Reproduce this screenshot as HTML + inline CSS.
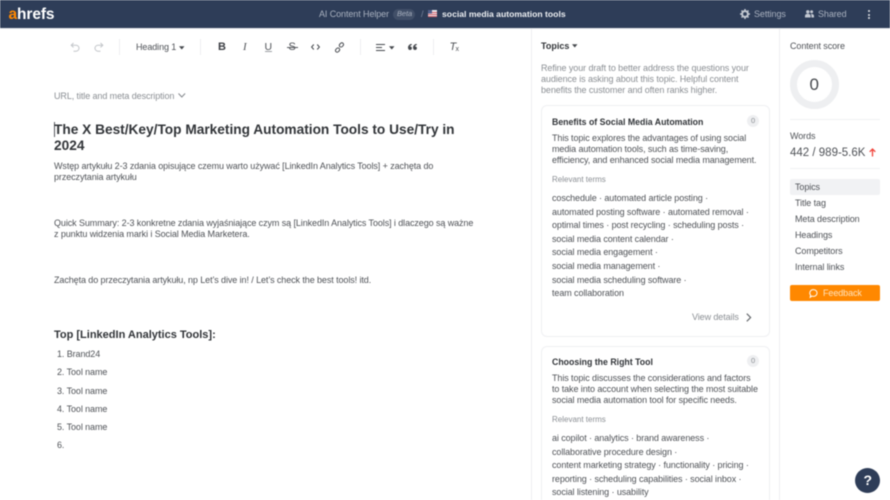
<!DOCTYPE html>
<html lang="en">
<head>
<meta charset="utf-8">
<title>AI Content Helper</title>
<style>
html,body{margin:0;padding:0;background:#fff}
body{width:890px;height:500px;overflow:hidden;position:relative;font-family:"Liberation Sans",sans-serif;color:#3c3f44}
#w{position:absolute;left:0;top:0;width:890px;height:500px;overflow:hidden;filter:blur(.4px)}
.t{position:absolute;white-space:nowrap;line-height:14px;height:14px;font-size:9px;letter-spacing:-.09px;color:#4f5257}
.b{position:absolute}
.g{color:#8a8e93}
.h{font-weight:bold;color:#313438;letter-spacing:0}
.s{position:absolute;width:1px;background:#eeeff1}
svg{position:absolute;overflow:visible}
</style>
</head>
<body>
<div id="w">
<!-- header -->
<div class="b" style="left:0;top:0;width:890px;height:28px;background:#2e3d58"></div>
<div class="b" style="left:0;top:28px;width:890px;height:1px;background:#e4e6ea"></div>
<div class="t" style="left:8.5px;top:7.500px;font-size:15.5px;font-weight:bold;color:#fff;letter-spacing:-.1px"><span style="color:#ff8800">a</span>hrefs</div>
<div class="t" style="left:319px;top:7px;color:#a9b1bf">AI Content Helper</div>
<div class="b" style="left:393px;top:9px;width:22px;height:11px;border-radius:6px;background:#414f68"></div>
<div class="t" style="left:397px;top:7px;font-size:7.500px;font-style:italic;color:#a9b1bf">Beta</div>
<div class="t" style="left:421px;top:7px;color:#75819a">/</div>
<svg style="left:428px;top:10px" width="9" height="7" viewBox="0 0 9 7"><rect width="9" height="7" fill="#e8e9ee"/><rect y="2" width="9" height="1" fill="#d8606a"/><rect y="4" width="9" height="1" fill="#d8606a"/><rect y="6" width="9" height="1" fill="#d8606a"/><rect width="4" height="3.5" fill="#54608c"/></svg>
<div class="t" style="left:442px;top:7px;font-weight:bold;color:#eef0f3;font-size:8.650px;letter-spacing:0">social media automation tools</div>
<svg style="left:740px;top:9px" width="10" height="10" viewBox="0 0 10 10"><circle cx="5" cy="5" r="2.9" fill="none" stroke="#c3c8d1" stroke-width="2"/><path d="M5 0v1.6M5 8.4V10M0 5h1.6M8.4 5H10M1.5 1.5l1.1 1.1M7.4 7.4l1.1 1.1M1.5 8.5l1.1-1.1M7.4 2.6l1.1-1.1" stroke="#c3c8d1" stroke-width="1.5"/></svg>
<div class="t" style="left:754px;top:7px;color:#a9b1bf">Settings</div>
<svg style="left:805px;top:10px" width="9" height="8" viewBox="0 0 9 8"><circle cx="2.8" cy="1.8" r="1.7" fill="#c3c8d1"/><circle cx="6.6" cy="1.8" r="1.5" fill="#c3c8d1"/><path d="M0 7.5V6c0-1.4 1.2-2.2 2.8-2.2S5.6 4.600 5.600 6v1.500zM6.400 7.500V5.800c0-.7-.2-1.300-.6-1.700 1.700-.4 3.200.3 3.200 1.900v1.500z" fill="#c3c8d1"/></svg>
<div class="t" style="left:818px;top:7px;color:#a9b1bf">Shared</div>
<div class="b" style="left:868px;top:10px;width:2.400px;height:2.400px;border-radius:50%;background:#dfe2e7"></div>
<div class="b" style="left:868px;top:13.500px;width:2.400px;height:2.400px;border-radius:50%;background:#dfe2e7"></div>
<div class="b" style="left:868px;top:17px;width:2.400px;height:2.400px;border-radius:50%;background:#dfe2e7"></div>

<!-- toolbar -->
<svg style="left:70px;top:42px" width="10" height="10" viewBox="0 0 10 10" fill="none" stroke="#c2c5c9" stroke-width="1"><path d="M3.500 1 1.200 3.200 3.500 5.400M1.500 3.200H6a3 3 0 0 1 0 6H3.500"/></svg>
<svg style="left:94px;top:42px" width="10" height="10" viewBox="0 0 10 10" fill="none" stroke="#c2c5c9" stroke-width="1"><path d="M6.500 1 8.800 3.200 6.500 5.400M8.500 3.200H4a3 3 0 0 0 0 6h2.500"/></svg>
<div class="s" style="left:119px;top:39px;height:16px"></div>
<div class="t" style="left:136px;top:40px">Heading 1</div>
<svg style="left:179px;top:45.500px" width="6" height="4"><path d="M0 .3h5.500L2.750 3.500z" fill="#45484d"/></svg>
<div class="s" style="left:200px;top:39px;height:16px"></div>
<div class="t" style="left:218px;top:40px;font-size:11px;font-weight:bold;color:#3c3f44">B</div>
<div class="t" style="left:243px;top:40px;font-size:11px;font-style:italic;font-family:'Liberation Serif',serif">I</div>
<div class="t" style="left:264.500px;top:39.500px;font-size:10.500px">U</div>
<div class="b" style="left:264.500px;top:51px;width:7.500px;height:1px;background:#9da0a5"></div>
<div class="t" style="left:288.500px;top:40px;font-size:11px">S</div>
<div class="b" style="left:287px;top:46.500px;width:10.500px;height:1px;background:#55585d"></div>
<svg style="left:311px;top:44px" width="9" height="6" viewBox="0 0 9 6" fill="none" stroke="#45484d" stroke-width="1"><path d="M2.800.5.600 3 2.800 5.500M6.200.5 8.400 3 6.200 5.500"/></svg>
<svg style="left:334.500px;top:42.500px" width="9" height="9" viewBox="0 0 9 9" fill="none" stroke="#45484d" stroke-width="1"><rect x="4.200" y=".2" width="4.600" height="3.400" rx="1.700" transform="rotate(-45 6.500 2)"/><rect x=".2" y="5.400" width="4.600" height="3.400" rx="1.700" transform="rotate(-45 2.500 7)"/></svg>
<div class="s" style="left:360px;top:39px;height:16px"></div>
<svg style="left:376px;top:43.500px" width="10" height="7" viewBox="0 0 10 7" stroke="#45484d" stroke-width="1"><path d="M0 .5h9M0 3.500h6M0 6.500h9"/></svg>
<svg style="left:388.500px;top:45.500px" width="6" height="4"><path d="M0 .3h5.500L2.750 3.500z" fill="#45484d"/></svg>
<svg style="left:408px;top:44px" width="9" height="6" viewBox="0 0 9 6" fill="#45484d"><path d="M3.800 0H2.600C1 .8 0 2 0 3.500 0 5 .8 6 2 6s1.900-.8 1.900-1.900C3.900 3 3 2.400 2 2.500 2.300 1.700 3 1 3.800 1zM8.800 0H7.600C6 .8 5 2 5 3.500 5 5 5.800 6 7 6s1.900-.8 1.900-1.900C8.900 3 8 2.400 7 2.500 7.300 1.700 8 1 8.800 1z"/></svg>
<div class="s" style="left:433px;top:39px;height:16px"></div>
<div class="t" style="left:449.500px;top:40px;font-size:11px;font-style:italic">T</div>
<div class="t" style="left:455.500px;top:43px;font-size:7px">x</div>

<!-- editor -->
<div class="t g" style="left:54px;top:88.500px">URL, title and meta description</div>
<svg style="left:177.500px;top:93px" width="8" height="5" fill="none" stroke="#85898e" stroke-width="1"><path d="M.5.500 3.800 4 7.100.5"/></svg>
<div class="b" style="left:54px;top:122px;width:1px;height:15px;background:#55585d"></div>
<div class="t h" style="left:54px;top:122.500px;font-size:13.700px">The X Best/Key/Top Marketing Automation Tools to Use/Try in</div>
<div class="t h" style="left:54px;top:138.500px;font-size:13.700px">2024</div>
<div class="t" style="left:54px;top:159px">Wstęp artykułu 2-3 zdania opisujące czemu warto używać [LinkedIn Analytics Tools] + zachęta do</div>
<div class="t" style="left:54px;top:170px">przeczytania artykułu</div>
<div class="t" style="left:54px;top:216px">Quick Summary: 2-3 konkretne zdania wyjaśniające czym są [LinkedIn Analytics Tools] i dlaczego są ważne</div>
<div class="t" style="left:54px;top:227px">z punktu widzenia marki i Social Media Marketera.</div>
<div class="t" style="left:54px;top:273px">Zachęta do przeczytania artykułu, np Let’s dive in! / Let’s check the best tools! itd.</div>
<div class="t h" style="left:54px;top:327.500px;font-size:11px">Top [LinkedIn Analytics Tools]:</div>
<div class="t" style="left:57px;top:347px">1. Brand24</div>
<div class="t" style="left:57px;top:365px">2. Tool name</div>
<div class="t" style="left:57px;top:383.500px">3. Tool name</div>
<div class="t" style="left:57px;top:401.500px">4. Tool name</div>
<div class="t" style="left:57px;top:420px">5. Tool name</div>
<div class="t" style="left:57px;top:438px">6.</div>

<!-- panel dividers -->
<div class="s" style="left:531px;top:29px;height:471px"></div>
<div class="s" style="left:779px;top:29px;height:471px"></div>

<!-- topics -->
<div class="t h" style="left:541px;top:38.500px">Topics</div>
<svg style="left:571.500px;top:43.500px" width="6" height="4"><path d="M0 .3h5.500L2.750 3.500z" fill="#45484d"/></svg>
<div class="t g" style="left:541px;top:61px">Refine your draft to better address the questions your</div>
<div class="t g" style="left:541px;top:72px">audience is asking about this topic. Helpful content</div>
<div class="t g" style="left:541px;top:83px">benefits the customer and often ranks higher.</div>

<div class="b" style="left:541px;top:105px;width:227px;height:230px;border:1px solid #eff0f2;border-radius:6px"></div>
<div class="t h" style="left:552px;top:114.500px;font-size:8.750px">Benefits of Social Media Automation</div>
<div class="b" style="left:747px;top:115px;width:12px;height:12px;border-radius:50%;background:#eeeff1"></div>
<div class="t g" style="left:751px;top:114px;font-size:7.500px">0</div>
<div class="t" style="left:552px;top:130.500px">This topic explores the advantages of using social</div>
<div class="t" style="left:552px;top:142px">media automation tools, such as time-saving,</div>
<div class="t" style="left:552px;top:153px">efficiency, and enhanced social media management.</div>
<div class="t g" style="left:552px;top:173px;font-size:8px;letter-spacing:0">Relevant terms</div>
<div class="t" style="left:552px;top:191px">coschedule · automated article posting ·</div>
<div class="t" style="left:552px;top:205px">automated posting software · automated removal ·</div>
<div class="t" style="left:552px;top:218px">optimal times · post recycling · scheduling posts ·</div>
<div class="t" style="left:552px;top:232px">social media content calendar ·</div>
<div class="t" style="left:552px;top:245px">social media engagement ·</div>
<div class="t" style="left:552px;top:259px">social media management ·</div>
<div class="t" style="left:552px;top:273px">social media scheduling software ·</div>
<div class="t" style="left:552px;top:286px">team collaboration</div>
<div class="t g" style="left:692px;top:310px">View details</div>
<svg style="left:745.500px;top:312.500px" width="6" height="9" fill="none" stroke="#65686d" stroke-width="1.200"><path d="M.8.700 4.600 4.500.8 8.300"/></svg>

<div class="b" style="left:541px;top:346px;width:227px;height:170px;border:1px solid #eff0f2;border-radius:6px"></div>
<div class="t h" style="left:552px;top:354.500px;font-size:8.750px">Choosing the Right Tool</div>
<div class="b" style="left:747px;top:355px;width:12px;height:12px;border-radius:50%;background:#eeeff1"></div>
<div class="t g" style="left:751px;top:354px;font-size:7.500px">0</div>
<div class="t" style="left:552px;top:370.500px">This topic discusses the considerations and factors</div>
<div class="t" style="left:552px;top:382px">to take into account when selecting the most suitable</div>
<div class="t" style="left:552px;top:393px">social media automation tool for specific needs.</div>
<div class="t g" style="left:552px;top:413px;font-size:8px;letter-spacing:0">Relevant terms</div>
<div class="t" style="left:552px;top:431px">ai copilot · analytics · brand awareness ·</div>
<div class="t" style="left:552px;top:445px">collaborative procedure design ·</div>
<div class="t" style="left:552px;top:458px">content marketing strategy · functionality · pricing ·</div>
<div class="t" style="left:552px;top:472px">reporting · scheduling capabilities · social inbox ·</div>
<div class="t" style="left:552px;top:485px">social listening · usability</div>

<!-- right column -->
<div class="t" style="left:790px;top:38.500px">Content score</div>
<div class="b" style="left:790px;top:60px;width:35px;height:35px;border:7px solid #eeeff1;border-radius:50%"></div>
<div class="t" style="left:809.500px;top:78px;font-size:17px;color:#45484d;letter-spacing:0">0</div>
<div class="b" style="left:790px;top:119px;width:90px;height:1px;background:#f0f1f3"></div>
<div class="t" style="left:790px;top:128.500px">Words</div>
<div class="t" style="left:790px;top:145.500px;font-size:11.500px;letter-spacing:0">442 / 989-5.6K</div>
<svg style="left:868.500px;top:147.500px" width="7" height="9" fill="none" stroke="#f0433a" stroke-width="1.300"><path d="M3.500 8.500V1M.7 3.800 3.500 1l2.800 2.800"/></svg>
<div class="b" style="left:790px;top:168px;width:90px;height:1px;background:#f0f1f3"></div>
<div class="b" style="left:790px;top:179px;width:90px;height:16px;border-radius:2px;background:#f1f2f4"></div>
<div class="t" style="left:795px;top:180px">Topics</div>
<div class="t" style="left:795px;top:196px">Title tag</div>
<div class="t" style="left:795px;top:212px">Meta description</div>
<div class="t" style="left:795px;top:228px">Headings</div>
<div class="t" style="left:795px;top:244px">Competitors</div>
<div class="t" style="left:795px;top:260px">Internal links</div>
<div class="b" style="left:790px;top:285px;width:90px;height:16px;border-radius:2px;background:#ff8800"></div>
<svg style="left:809px;top:288.500px" width="9" height="9" viewBox="0 0 9 9" fill="none" stroke="#fff" stroke-width="1"><path d="M4.700.600a3.600 3.400 0 1 1-1.700 6.500L1.200 8.300l.4-2.200A3.600 3.400 0 0 1 4.700.600z"/></svg>
<div class="t" style="left:823px;top:286px;color:#ffe3bd">Feedback</div>

<div class="b" style="left:855px;top:467.500px;width:25px;height:25px;border-radius:50%;background:#2e3d58"></div>
<div class="t" style="left:863.500px;top:473px;font-size:14px;font-weight:bold;color:#fff;letter-spacing:0">?</div>
</div>
</body>
</html>
